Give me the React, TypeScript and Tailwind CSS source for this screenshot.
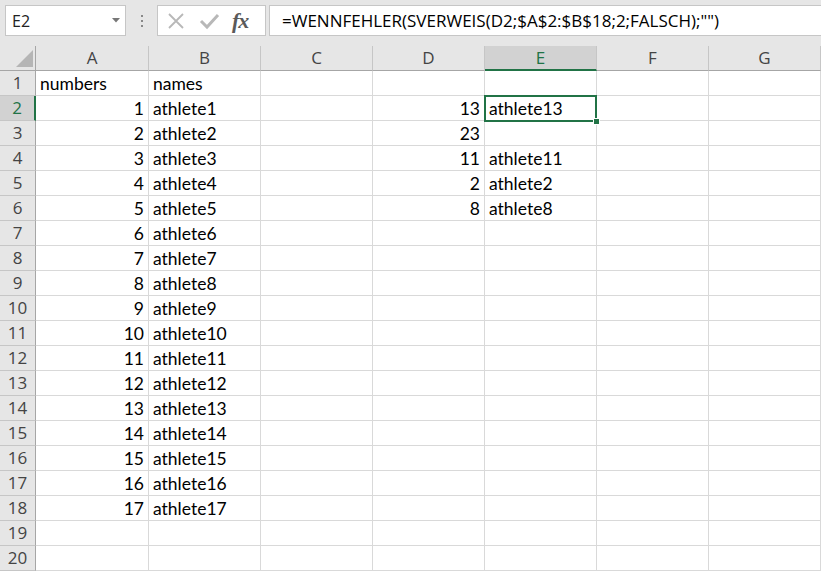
import React from "react";

const cols = ["A", "B", "C", "D", "E", "F", "G"];

type Cell = { v: string; align?: "left" | "right" };

function buildData(): Record<string, Cell> {
  const d: Record<string, Cell> = {};
  d["A1"] = { v: "numbers" };
  d["B1"] = { v: "names" };
  for (let r = 2; r <= 18; r++) {
    d["A" + r] = { v: String(r - 1), align: "right" };
    d["B" + r] = { v: "athlete" + (r - 1) };
  }
  const dv = ["13", "23", "11", "2", "8"];
  const ev = ["athlete13", "", "athlete11", "athlete2", "athlete8"];
  dv.forEach((v, i) => {
    d["D" + (i + 2)] = { v, align: "right" };
    if (ev[i]) d["E" + (i + 2)] = { v: ev[i] };
  });
  return d;
}

const data = buildData();
const cellFont = { fontFamily: "Lato, 'Liberation Sans', sans-serif" };
const uiFont = { fontFamily: "'Open Sans', 'Noto Sans', sans-serif" };

export default function App() {
  const rows = Array.from({ length: 20 }, (_, i) => i + 1);
  return (
    <div className="w-[821px] h-[571px] bg-[#e6e6e6] overflow-hidden flex flex-col select-none">
      {/* toolbar */}
      <div className="h-[46px] flex items-start pt-[5px] pl-[5px]" style={uiFont}>
        <div className="w-[121px] h-[31px] bg-white border border-[#c6c6c6] flex items-center pl-[6px] pr-[5px] text-[16px] text-[#222]">
          <span className="flex-1">E2</span>
          <svg width="8" height="5" viewBox="0 0 8 5"><path d="M0 0 L8 0 L4 4.5 Z" fill="#777" /></svg>
        </div>
        <div className="w-[31px] h-[31px] flex flex-col items-center justify-center gap-[3px]">
          <span className="w-[2px] h-[2px] bg-[#888]" />
          <span className="w-[2px] h-[2px] bg-[#888]" />
          <span className="w-[2px] h-[2px] bg-[#888]" />
        </div>
        <div className="w-[109px] h-[31px] bg-white border border-[#c6c6c6] flex items-center pl-[8px] gap-[12px]">
          <svg width="20" height="20" viewBox="0 0 20 20"><path d="M3 3 L17 17 M17 3 L3 17" stroke="#b8b8b8" strokeWidth="1.8" /></svg>
          <svg width="22" height="20" viewBox="0 0 22 20"><path d="M3 10 L9 16 L20 4" stroke="#b8b8b8" strokeWidth="3" fill="none" /></svg>
          <span className="text-[22px] italic font-bold text-[#5a5a5a] leading-none tracking-[-1px]" style={{ fontFamily: "'Liberation Serif', serif" }}>fx</span>
        </div>
        <div className="ml-[3px] flex-1 h-[31px] bg-white border-y border-l border-[#c6c6c6] flex items-center pl-[12px] text-[17px] text-black whitespace-nowrap">
          =WENNFEHLER(SVERWEIS(D2;$A$2:$B$18;2;FALSCH);"")
        </div>
      </div>
      {/* sheet */}
      <div className="relative grid grid-cols-[36px_113px_112px_112px_112px_112px_112px_112px] grid-rows-[25px_repeat(20,25px)]">
        {/* corner */}
        <div className="relative bg-[#e6e6e6] border-r border-b border-[#a6a6a6]">
          <svg className="absolute right-[2px] bottom-[3px]" width="17" height="17" viewBox="0 0 17 17"><path d="M17 0 L17 17 L0 17 Z" fill="#b5b5b5" /></svg>
        </div>
        {cols.map((c) => (
          <div
            key={c}
            className={
              c === "E"
                ? "bg-[#d2d2d2] border-r border-[#c6c6c6] border-b-2 border-b-[#217346] flex items-center justify-center text-[17px] text-[#217346]"
                : "bg-[#e6e6e6] border-r border-[#c6c6c6] border-b border-b-[#a6a6a6] flex items-center justify-center text-[17px] text-[#444]"
            }
            style={uiFont}
          >
            {c}
          </div>
        ))}
        {rows.map((r) => (
          <React.Fragment key={r}>
            <div
              className={
                r === 2
                  ? "bg-[#d2d2d2] border-b border-[#c6c6c6] border-r-2 border-r-[#217346] flex items-center justify-center text-[17px] text-[#217346]"
                  : "bg-[#e6e6e6] border-b border-[#c6c6c6] border-r border-r-[#a6a6a6] flex items-center justify-center text-[17px] text-[#444]"
              }
              style={uiFont}
            >
              {r}
            </div>
            {cols.map((c) => {
              const cell = data[c + r];
              return (
                <div
                  key={c}
                  className={
                    "bg-white border-r border-b border-[#d9d9d9] flex items-end pb-0 px-[4px] text-[17.5px] leading-[22px] text-black whitespace-nowrap " +
                    (cell?.align === "right" ? "justify-end" : "justify-start")
                  }
                  style={cellFont}
                >
                  {cell?.v ?? ""}
                </div>
              );
            })}
          </React.Fragment>
        ))}
        {/* selection */}
        <div className="absolute left-[484px] top-[49px] w-[113px] h-[27px] border-2 border-[#217346] pointer-events-none" />
        <div className="absolute left-[593px] top-[72px] w-[7px] h-[7px] bg-[#217346] border border-white pointer-events-none" />
      </div>
    </div>
  );
}
